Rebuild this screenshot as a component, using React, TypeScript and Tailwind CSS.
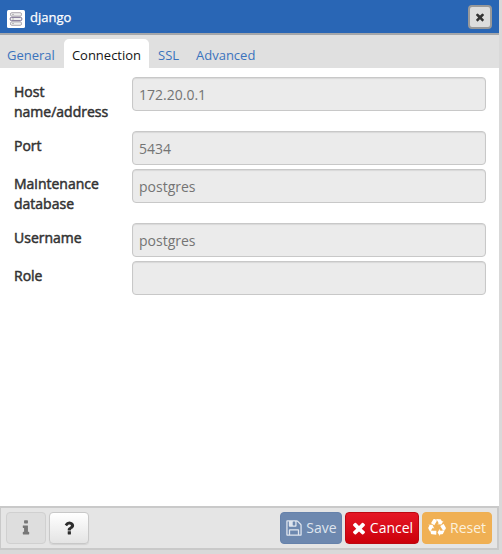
import type { ReactNode } from "react";

const TIMES =
  "M1490 1322q0 40-28 68l-136 136q-28 28-68 28t-68-28l-294-294-294 294q-28 28-68 28t-68-28l-136-136q-28-28-28-68t28-68l294-294-294-294q-28-28-28-68t28-68l136-136q28-28 68-28t68 28l294 294 294-294q28-28 68-28t68 28l136 136q28 28 28 68t-28 68l-294 294 294 294q28 28 28 68z";
const INFO =
  "M1216 1344v128q0 26-19 45t-45 19h-512q-26 0-45-19t-19-45v-128q0-26 19-45t45-19h64v-384h-64q-26 0-45-19t-19-45v-128q0-26 19-45t45-19h384q26 0 45 19t19 45v576h64q26 0 45 19t19 45zm-128-1152v192q0 26-19 45t-45 19h-256q-26 0-45-19t-19-45v-192q0-26 19-45t45-19h256q26 0 45 19t19 45z";
const QUESTION =
  "M1088 1256v240q0 16-12 28t-28 12h-240q-16 0-28-12t-12-28v-240q0-16 12-28t28-12h240q16 0 28 12t12 28zm316-600q0 54-15.5 101t-35 76.5-55 59.5-57.5 43.5-61 35.5q-41 23-68.5 65t-27.5 67q0 17-12 32.5t-28 15.5h-240q-15 0-25.5-18.5t-10.5-37.5v-45q0-83 65-156.5t143-108.5q59-27 84-56t25-76q0-42-46.5-74t-107.5-32q-65 0-108 29-35 25-107 115-13 16-31 16-12 0-25-8l-164-125q-13-10-15.5-25t5.5-28q160-266 464-266 80 0 161 31t146 83 106 127.5 41 158.5z";
const SAVE =
  "M512 1536h768v-384h-768v384zm896 0h128v-896q0-14-10-38.5t-20-34.5l-281-281q-10-10-34-20t-39-10v416q0 40-28 68t-68 28h-576q-40 0-68-28t-28-68v-416h-128v1280h128v-416q0-40 28-68t68-28h832q40 0 68 28t28 68v416zm-384-928v-320q0-13-9.5-22.5t-22.5-9.5h-192q-13 0-22.5 9.5t-9.5 22.5v320q0 13 9.5 22.5t22.5 9.5h192q13 0 22.5-9.5t9.5-22.5zm640 32v928q0 40-28 68t-68 28h-1344q-40 0-68-28t-28-68v-1344q0-40 28-68t68-28h928q40 0 88 20t76 48l280 280q28 28 48 76t20 88z";
const RECYCLE =
  "M836 1169l-15 368-2 22-420-29q-36-3-67-31.5t-47-65.5q-11-27-14.5-55t4-65 12-55 21.5-64 19-53q78 12 509 28zm-387-586l180 379-147-92q-63 72-111.5 144.5t-72.5 125-39.5 94.5-18.5 63l-4 21-190-357q-17-26-18-56t6-47l8-18q35-63 114-188l-140-86zm1231 517l-188 359q-12 29-36.5 46.5t-43.5 20.5l-18 4q-71 7-219 12l8 164-230-367 211-362 7 173q170 16 283 5t170-33zm-785-924q-47 63-265 435l-317-187-19-12 225-356q20-31 60-45t80-10q24 2 48.5 12t42 21 41.5 33 36 34.5 36 39.5 32 35zm655 307l212 363q18 37 12.5 76t-27.5 74q-13 20-33 37t-38 28-48.5 22-47 16-51.5 14-46 12q-34-72-265-436l313-195zm-143-226l142-83-220 373-419-20 151-86q-34-89-75-166t-75.5-123.5-64.5-80-47-46.5l-17-13 405 1q31-3 58 10.5t39 28.5l11 15q39 61 112 190z";

function Glyph({ d, className }: { d: string; className: string }) {
  return (
    <svg viewBox="0 0 1792 1792" fill="currentColor" className={`shrink-0 ${className}`}>
      <path d={d} />
    </svg>
  );
}

function ServerIcon() {
  return (
    <svg viewBox="0 0 18 18" className="ml-[7px] mt-[4px] h-[18px] w-[18px]">
      <rect width="18" height="18" rx="1.5" fill="#fff" />
      <g fill="#eee" strokeWidth="1">
        <rect x="3.5" y="2.7" width="11" height="3.4" rx="1.3" stroke="#aaa6ae" />
        <rect x="3.5" y="11.9" width="11" height="3.4" rx="1.3" stroke="#aaa6ae" />
        <rect x="3.2" y="7.3" width="11.6" height="3.4" rx="1.3" stroke="#75698c" />
      </g>
      <path d="M5 4.4h2M5 9h2M5 13.6h2" stroke="#b5b5b5" />
    </svg>
  );
}

function Field({ label, value, gap }: { label: string; value: string; gap: string }) {
  return (
    <div className={`flex ${gap}`}>
      <label className="w-[118px] shrink-0 pt-[5px] pr-4 text-[14px] leading-5 text-[#333] [-webkit-text-stroke:0.5px_#333]">
        {label}
      </label>
      <input
        readOnly
        value={value}
        className="h-[34px] w-[354px] rounded-[4px] border border-[#c8c8c8] bg-[#ebebeb] px-1.5 text-[14px] text-[#747474] shadow-[inset_0_1px_1px_rgba(0,0,0,0.08)] outline-none"
      />
    </div>
  );
}

function Button({ className, children }: { className: string; children: ReactNode }) {
  return (
    <button className={`flex h-8 shrink-0 items-center justify-center rounded-[4px] border text-[14px] ${className}`}>
      {children}
    </button>
  );
}

export default function App() {
  return (
    <div className="flex h-[554px] w-[502px] flex-col overflow-hidden bg-[#d9d9d9] font-['Open_Sans',sans-serif]">
      <div className="flex h-[550px] w-[499px] flex-col bg-white">
        <header className="flex h-[35px] shrink-0 items-center border-b-2 border-[#a5a7aa] bg-[#2966b5]">
          <ServerIcon />
          <span className="ml-[5px] pt-[2px] text-[13px] text-white [-webkit-text-stroke:0.25px_white]">django</span>
          <button className="mr-[7px] ml-auto flex h-6 w-6 items-center justify-center rounded-[4px] border-2 border-[#999] bg-[#ddd] text-[#333]">
            <Glyph d={TIMES} className="h-3 w-3" />
          </button>
        </header>
        <nav className="flex h-[33px] shrink-0 items-end bg-[#e0e0e0] text-[13px] text-[#3b73bd]">
          <a className="w-[64px] pb-[3px] pl-[7px]">General</a>
          <a className="flex h-[29px] w-[85px] items-center justify-center rounded-t-[5px] bg-white pt-[4px] text-[#151515]">
            Connection
          </a>
          <a className="w-[47px] pb-[3px] pl-[9px]">SSL</a>
          <a className="pb-[3px]">Advanced</a>
        </nav>
        <main className="flex-1 pt-[9px] pr-[13px] pl-[14px]">
          <Field label="Host name/address" value="172.20.0.1" gap="mb-[9px]" />
          <Field label="Port" value="5434" gap="mb-1" />
          <Field label="Maintenance database" value="postgres" gap="mb-[9px]" />
          <Field label="Username" value="postgres" gap="mb-1" />
          <Field label="Role" value="" gap="" />
        </main>
        <footer className="flex h-[44px] shrink-0 items-center border-2 border-l-1 border-[#c9c9c9] bg-[#e5e5e5] pl-[5px] pr-[5px]">
          <Button className="w-10 border-[#d0d0d0] bg-[#dedede] text-[#777]">
            <Glyph d={INFO} className="h-[18px] w-[18px]" />
          </Button>
          <Button className="ml-[3px] w-10 border-[#c8c8c8] bg-linear-to-b from-white to-[#e4e4e4] text-[#2d2d2d] shadow-[0_1px_1px_rgba(0,0,0,0.08)]">
            <Glyph d={QUESTION} className="h-[18px] w-[18px]" />
          </Button>
          <Button className="ml-auto w-[62px] gap-[3px] border-[#6682ab] bg-[#6d88af] text-[#dfe5ee]">
            <Glyph d={SAVE} className="h-[18px] w-[18px]" />
            <span className="pb-px">Save</span>
          </Button>
          <Button className="ml-[3px] w-[74px] gap-[2px] border-[#bd0710] bg-linear-to-b from-[#e51624] to-[#cc0009] text-white">
            <Glyph d={TIMES} className="h-[18px] w-[18px]" />
            <span className="pr-px pb-px">Cancel</span>
          </Button>
          <Button className="ml-[3px] w-[70px] gap-1 border-[#efb052] bg-[#f0b054] text-[#fcf0dc]">
            <Glyph d={RECYCLE} className="h-[18px] w-[18px] text-white" />
            <span className="pb-px">Reset</span>
          </Button>
        </footer>
      </div>
    </div>
  );
}
